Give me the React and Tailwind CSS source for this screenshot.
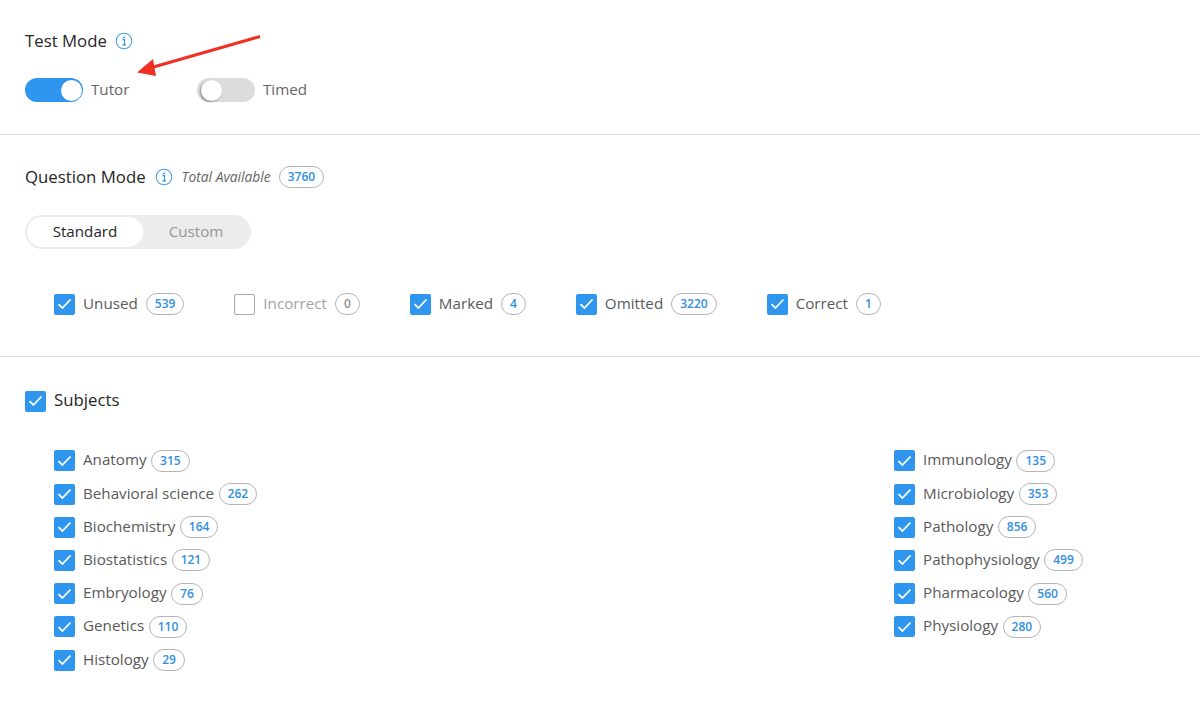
const LEFT = [
  ['Anatomy', 315],
  ['Behavioral science', 262],
  ['Biochemistry', 164],
  ['Biostatistics', 121],
  ['Embryology', 76],
  ['Genetics', 110],
  ['Histology', 29],
]

const RIGHT = [
  ['Immunology', 135],
  ['Microbiology', 353],
  ['Pathology', 856],
  ['Pathophysiology', 499],
  ['Pharmacology', 560],
  ['Physiology', 280],
]

const MODES = [
  ['Unused', 539, true],
  ['Incorrect', 0, false],
  ['Marked', 4, true],
  ['Omitted', 3220, true],
  ['Correct', 1, true],
]

function InfoIcon() {
  return (
    <svg width="18" height="18" viewBox="0 0 18 18" fill="none" className="shrink-0">
      <circle cx="9" cy="9" r="7.8" stroke="#4a9fe3" strokeWidth="1.1" />
      <circle cx="9" cy="5.4" r="1" fill="#2f95ee" />
      <path d="M7.4 7.6H9.5V12.6M7.3 12.8H11" stroke="#2f95ee" strokeWidth="1.2" />
    </svg>
  )
}

function Checkbox({ checked }) {
  if (!checked) {
    return <span className="w-[21px] h-[21px] shrink-0 rounded-[2px] border border-[#a8a8a8] bg-white" />
  }
  return (
    <span className="w-[21px] h-[21px] shrink-0 rounded-[2px] bg-[#2f96f0] flex items-center justify-center">
      <svg width="15" height="12" viewBox="0 0 15 12" fill="none">
        <path d="M1.5 6.2L5.4 10L13.5 1.5" stroke="white" strokeWidth="1.8" />
      </svg>
    </span>
  )
}

function Badge({ value, muted }) {
  return (
    <span className={`h-[22px] px-[8px] rounded-full border border-[#b5b5b5] flex items-center justify-center text-[12px] font-semibold ${muted ? 'text-[#8f8f8f]' : 'text-[#2f8fe4]'}`}>
      {value}
    </span>
  )
}

function Toggle({ on, label }) {
  return (
    <div className="flex items-center gap-2">
      <div className={`w-[58px] h-[24px] rounded-full flex items-center ${on ? 'bg-[#2f96f0] justify-end pr-[1px]' : 'bg-[#dcdcdc] justify-start pl-[4px]'}`}>
        <span className={`w-[21px] h-[21px] rounded-full bg-white ${on ? '' : 'shadow-[-1px_1px_2px_rgba(0,0,0,0.4)]'}`} />
      </div>
      <span className="pb-[2px] text-[15.2px] text-[#666666]">{label}</span>
    </div>
  )
}

function SubjectRow({ name, count }) {
  return (
    <div className="h-[33.2px] flex items-center">
      <Checkbox checked />
      <span className="ml-2 pb-[2px] text-[15.2px] text-[#595959]">{name}</span>
      <span className="ml-[4.5px]"><Badge value={count} /></span>
    </div>
  )
}

export default function App() {
  return (
    <div className="relative w-[1200px] h-[707px] overflow-hidden bg-white font-['Open_Sans',sans-serif]">
      {/* Flecha roja */}
      <svg className="absolute left-[130px] top-[30px]" width="135" height="50" viewBox="0 0 135 50" fill="none">
        <path d="M130 6.5L20 38" stroke="#ee3124" strokeWidth="3" />
        <path d="M7 42.5L23 29L26 46Z" fill="#ee3124" />
      </svg>

      <section className="h-[135px] border-b border-[#dedede] px-[25px] pt-[29px]">
        <div className="flex items-center gap-2 h-6">
          <span className="text-[16.8px] text-[#262626]">Test Mode</span>
          <InfoIcon />
        </div>
        <div className="flex gap-[67.5px] mt-[25px]">
          <Toggle on label="Tutor" />
          <Toggle label="Timed" />
        </div>
      </section>

      <section className="h-[222px] border-b border-[#dedede] px-[25px] pt-[30px]">
        <div className="flex items-center h-6">
          <span className="text-[16.8px] text-[#262626]">Question Mode</span>
          <span className="ml-[9px]"><InfoIcon /></span>
          <span className="ml-[9px] text-[13.8px] italic text-[#666666]">Total Available</span>
          <span className="ml-2"><Badge value={3760} /></span>
        </div>
        <div className="mt-[26px] w-[226px] h-[34px] rounded-full bg-[#ececec] flex items-center p-[2px]">
          <span className="w-[116px] h-[30px] pb-[2px] rounded-full bg-white flex items-center justify-center text-[15.2px] text-[#262626]">Standard</span>
          <span className="flex-1 pb-[2px] text-center text-[15.2px] text-[#969696]">Custom</span>
        </div>
        <div className="mt-[44px] pl-[29px] flex gap-[50px]">
          {MODES.map(([name, count, checked]) => (
            <div key={name} className="flex items-center h-[22px]">
              <Checkbox checked={checked} />
              <span className={`ml-2 pb-[2px] text-[15.2px] ${checked ? 'text-[#595959]' : 'text-[#a3a3a3]'}`}>{name}</span>
              <span className="ml-2"><Badge value={count} muted={!checked} /></span>
            </div>
          ))}
        </div>
      </section>

      <section className="px-[25px] pt-[33px]">
        <div className="flex items-center gap-2 h-[22px]">
          <Checkbox checked />
          <span className="pb-[2px] text-[16.8px] text-[#262626]">Subjects</span>
        </div>
        <div className="mt-[32.3px] pl-[29px] flex">
          <div className="w-[840px]">
            {LEFT.map(([name, count]) => <SubjectRow key={name} name={name} count={count} />)}
          </div>
          <div>
            {RIGHT.map(([name, count]) => <SubjectRow key={name} name={name} count={count} />)}
          </div>
        </div>
      </section>
    </div>
  )
}
